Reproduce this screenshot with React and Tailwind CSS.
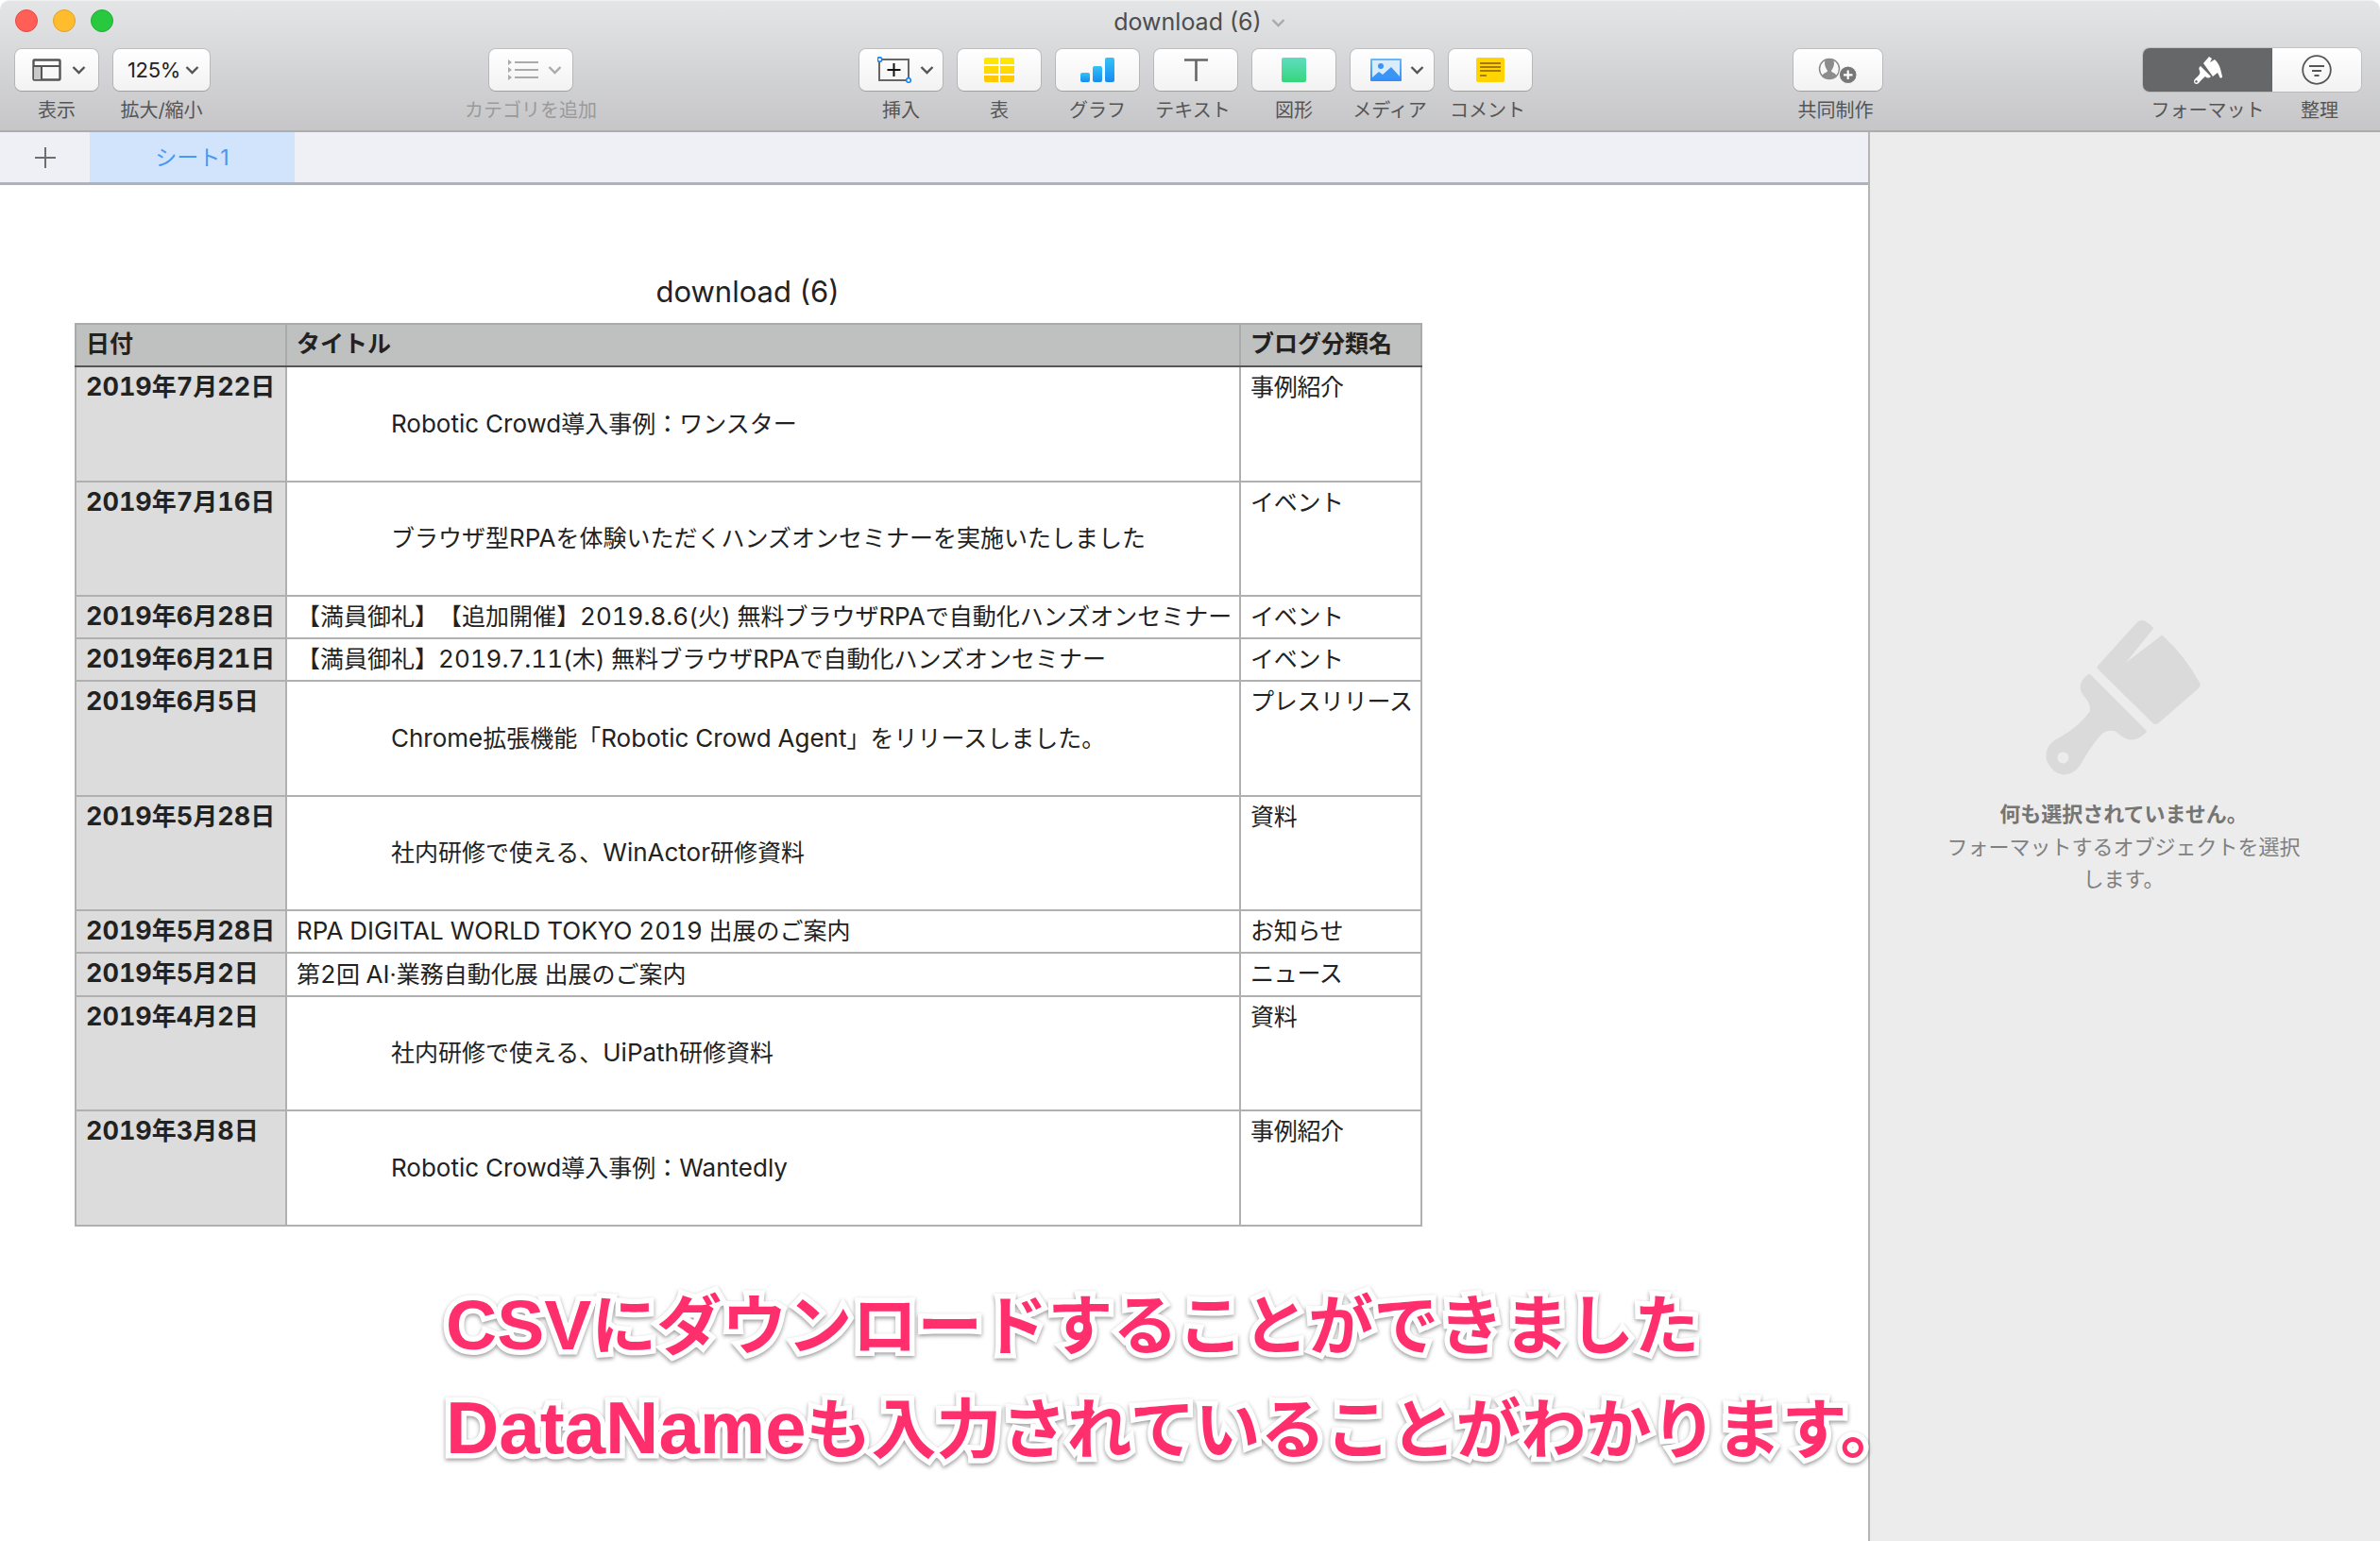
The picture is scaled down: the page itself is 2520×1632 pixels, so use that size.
import React from 'react';

const rows = [
  { date: '2019年7月22日', title: 'Robotic Crowd導入事例：ワンスター', cat: '事例紹介', h: 'h-[122px]', tall: true },
  { date: '2019年7月16日', title: 'ブラウザ型RPAを体験いただくハンズオンセミナーを実施いたしました', cat: 'イベント', h: 'h-[121px]', tall: true },
  { date: '2019年6月28日', title: '【満員御礼】【追加開催】2019.8.6(火) 無料ブラウザRPAで自動化ハンズオンセミナー', cat: 'イベント', h: 'h-[45px]' },
  { date: '2019年6月21日', title: '【満員御礼】2019.7.11(木) 無料ブラウザRPAで自動化ハンズオンセミナー', cat: 'イベント', h: 'h-[45px]' },
  { date: '2019年6月5日', title: 'Chrome拡張機能「Robotic Crowd Agent」をリリースしました。', cat: 'プレスリリース', h: 'h-[122px]', tall: true },
  { date: '2019年5月28日', title: '社内研修で使える、WinActor研修資料', cat: '資料', h: 'h-[121px]', tall: true },
  { date: '2019年5月28日', title: 'RPA DIGITAL WORLD TOKYO 2019 出展のご案内', cat: 'お知らせ', h: 'h-[45px]' },
  { date: '2019年5月2日', title: '第2回 AI·業務自動化展 出展のご案内', cat: 'ニュース', h: 'h-[46px]' },
  { date: '2019年4月2日', title: '社内研修で使える、UiPath研修資料', cat: '資料', h: 'h-[121px]', tall: true },
  { date: '2019年3月8日', title: 'Robotic Crowd導入事例：Wantedly', cat: '事例紹介', h: 'h-[122px]', tall: true },
];

// latin runs sit larger than the kana next to them in the reference
const Mixed = ({ text, latin }) =>
  text.split(/([A-Za-z0-9.]+(?: [A-Za-z0-9.]+)*)/).map((part, i) =>
    i % 2 ? <span key={i} className={latin}>{part}</span> : part
  );

const Chevron = ({ color = '#555' }) => (
  <svg width="15" height="10" viewBox="0 0 15 10" fill="none">
    <path d="M1.5 2 L7.5 8 L13.5 2" stroke={color} strokeWidth="2.4" />
  </svg>
);

const Tool = ({ label, w, className = '', labelClass = '', muted, children }) => (
  <div className={`flex flex-col items-center shrink-0 ${w} ${className}`}>
    <div className="h-[44px] w-full rounded-[7px] bg-linear-to-b from-white to-[#f2f2f2] shadow-[0_0_0_1px_rgba(0,0,0,0.12),0_1px_1px_rgba(0,0,0,0.12)] flex items-center justify-center">
      {children}
    </div>
    <div className={`mt-[8px] text-[20px] leading-[26px] whitespace-nowrap ${muted ? 'text-[#9a9a9a]' : 'text-[#555]'} ${labelClass}`}>{label}</div>
  </div>
);

const Brush = ({ className, fill, hole }) => (
  <svg className={className} viewBox="500 100 495 500">
    <path fill={fill} d="M665 250 L790 112 Q800 102 815 108 Q830 115 843 130 L755 240 L870 152 Q940 215 990 305 Q993 315 985 322 L858 432 Q848 440 838 430 L668 262 Q660 255 665 250 Z" />
    <path fill={fill} d="M640 275 L822 458 Q800 485 770 485 Q745 480 725 460 Q700 450 680 465 Q650 495 610 565 Q590 595 555 596 Q520 590 503 550 Q495 510 530 485 Q600 450 640 395 Q645 375 625 350 Q605 330 612 305 Q620 285 640 275 Z" />
    <circle cx="555" cy="542" r="18" fill={hole} />
  </svg>
);

export default function App() {
  return (
    <div className="relative w-[2520px] h-[1632px] overflow-hidden bg-white flex flex-col font-['Inter','Noto_Sans_CJK_JP',sans-serif] text-[#222]">
      {/* toolbar */}
      <div className="h-[140px] shrink-0 rounded-t-[10px] bg-linear-to-b from-[#e4e5e7] to-[#c6c6c8] border-t border-t-[#f0f0f0] border-b-2 border-b-[#adadad]">
        <div className="relative h-[45px] flex items-center justify-center">
          <div className="absolute left-[16px] top-[9px] flex gap-[16px]">
            <span className="w-[24px] h-[24px] rounded-full bg-[#ff5f57] border border-[#e5483f]" />
            <span className="w-[24px] h-[24px] rounded-full bg-[#ffbd2e] border border-[#e0a028]" />
            <span className="w-[24px] h-[24px] rounded-full bg-[#28c93f] border border-[#22ad35]" />
          </div>
          <div className="ml-[20px] flex items-center gap-[10px] text-[25px] leading-none text-[#4d4d4d]">
            download (6)
            <Chevron color="#aaa" />
          </div>
        </div>
        <div className="flex pl-[16px] pt-[6px]">
          <Tool label="表示" w="w-[88px]">
            <svg width="31" height="24" viewBox="0 0 31 24" className="ml-[5px] mr-[11px]">
              <rect x="1.5" y="1.5" width="28" height="21" fill="none" stroke="#555" strokeWidth="2.4" rx="1" />
              <rect x="2" y="8" width="8" height="14" fill="#c9c9c9" />
              <path d="M2 8 H29 M10 8 V22" stroke="#555" strokeWidth="2" />
            </svg>
            <Chevron />
          </Tool>
          <Tool label="拡大/縮小" w="w-[102px]" className="ml-[16px]">
            <span className="ml-[4px] mr-[5px] text-[22px] tracking-[-0.3px] text-[#222]">125%</span>
            <Chevron />
          </Tool>
          <Tool label="カテゴリを追加" w="w-[88px]" className="ml-[296px]" muted>
            <svg width="32" height="24" viewBox="0 0 32 24" className="ml-[8px] mr-[10px]">
              <path d="M0 1 L4 4 L0 7 Z M0 9 L4 12 L0 15 Z M0 17 L4 20 L0 23 Z" fill="#aaa" />
              <path d="M7 4 H32 M7 12 H32 M7 20 H32" stroke="#aaa" strokeWidth="2" />
            </svg>
            <Chevron color="#aaa" />
          </Tool>
          <Tool label="挿入" w="w-[88px]" className="ml-[304px]">
            <svg width="36" height="28" viewBox="0 0 36 28" className="ml-[9px] mr-[9px]">
              <rect x="2" y="3" width="31" height="22" fill="none" stroke="#666" strokeWidth="2" />
              <path d="M17.5 7 V21 M10.5 14 H24.5" stroke="#111" strokeWidth="2" />
              <circle cx="2.5" cy="3" r="2.3" fill="#fff" stroke="#0a84ff" strokeWidth="1.6" />
              <circle cx="33" cy="25" r="2.3" fill="#fff" stroke="#0a84ff" strokeWidth="1.6" />
            </svg>
            <Chevron />
          </Tool>
          <Tool label="表" w="w-[88px]" className="ml-[16px]">
            <div className="w-[32px] h-[26px] grid grid-cols-2 grid-rows-3 gap-[2px] rounded-[2px] overflow-hidden">
              <span className="bg-[#ffe600]" /><span className="bg-[#ffe600]" />
              <span className="bg-[#ffd900]" /><span className="bg-[#ffd900]" />
              <span className="bg-[#ffc800]" /><span className="bg-[#ffc800]" />
            </div>
          </Tool>
          <Tool label="グラフ" w="w-[88px]" className="ml-[16px]">
            <div className="w-[36px] h-[26px] flex items-end gap-[3px]">
              <span className="flex-1 h-[10px] rounded-[2px] bg-linear-to-b from-[#35c3f5] to-[#1a8bf0]" />
              <span className="flex-1 h-[17px] rounded-[2px] bg-linear-to-b from-[#35c3f5] to-[#1a8bf0]" />
              <span className="flex-1 h-[26px] rounded-[2px] bg-linear-to-b from-[#35c3f5] to-[#1a8bf0]" />
            </div>
          </Tool>
          <Tool label="テキスト" w="w-[88px]" className="ml-[16px]" labelClass="-ml-[6px]">
            <svg width="25" height="24" viewBox="0 0 25 24">
              <path d="M0 1.5 H25 M12.5 1.5 V24" stroke="#666" strokeWidth="2.6" />
            </svg>
          </Tool>
          <Tool label="図形" w="w-[88px]" className="ml-[16px]">
            <div className="w-[26px] h-[26px] rounded-[2px] bg-linear-to-b from-[#5fdcc0] to-[#33d67a]" />
          </Tool>
          <Tool label="メディア" w="w-[88px]" className="ml-[16px]" labelClass="-ml-[5px]">
            <svg width="33" height="24" viewBox="0 0 33 24" className="ml-[10px] mr-[9px]">
              <defs>
                <linearGradient id="mediaBg" x1="0" y1="0" x2="0" y2="1">
                  <stop offset="0" stopColor="#6db8f7" />
                  <stop offset="1" stopColor="#2f8dfb" />
                </linearGradient>
              </defs>
              <rect width="33" height="24" rx="1" fill="url(#mediaBg)" />
              <rect x="2" y="2" width="29" height="18" fill="#d8ecfc" />
              <circle cx="11" cy="8" r="3" fill="#3b95f5" />
              <path d="M2 20 L9 14 L13 17 L22 9 L31 19 V20 Z" fill="#3b95f5" />
            </svg>
            <Chevron />
          </Tool>
          <Tool label="コメント" w="w-[88px]" className="ml-[16px]" labelClass="-ml-[6px]">
            <svg width="30" height="26" viewBox="0 0 30 26">
              <rect width="30" height="26" rx="2" fill="#ffd400" />
              <path d="M4 6 H26 M4 10 H26 M4 14 H26 M4 19 H11" stroke="#a5781e" strokeWidth="2" />
            </svg>
          </Tool>
          <Tool label="共同制作" w="w-[94px]" className="ml-[277px]" labelClass="-ml-[5px]">
            <svg width="70" height="45" viewBox="0 0 70 45" className="ml-[8px] -mt-[3px]">
              <circle cx="22" cy="23" r="10.5" fill="none" stroke="#8a8a8a" strokeWidth="1.5" />
              <path d="M14 31 C15 27 20 27 20 25 C18 22 17 19 17 17 C17 13 19 12 22 12 C25 12 27 13 27 17 C27 19 26 22 24 25 C24 27 29 27 30 31 C27 34 17 34 14 31 Z" fill="#8c8c8c" />
              <circle cx="41.7" cy="29.3" r="9.4" fill="#777" stroke="#f8f8f8" strokeWidth="1.2" />
              <path d="M41.7 24.5 V34 M37 29.3 H46.5" stroke="#fff" strokeWidth="2.2" />
            </svg>
          </Tool>
          <div className="ml-[276px] flex flex-col shrink-0">
            <div className="flex h-[46px] -mt-[1px] rounded-[7px] shadow-[0_0_0_1px_rgba(0,0,0,0.1)] overflow-hidden">
              <div className="w-[137px] bg-[#666768] flex items-center justify-center">
                <svg width="60" height="45" viewBox="0 0 60 45" className="ml-[5px] -mt-[3px]">
                  <path d="M23 17 L29 10 L32 12 L30 16 L35 13 C38 16 40 19 41 23 L43 31 C43 33 40 33 40 31 L38 27 L33 31 Z" fill="#fff" />
                  <path fillRule="evenodd" d="M20 20 L31 31 C29 33 27 33 25 31 C22 33 20 36 18 38 C16 40 13 39 13 36 C13 34 15 33 17 31 C19 29 20 27 19 25 C18 23 18 21 20 20 Z M15.5 35 a1.3 1.3 0 1 0 0.01 0 Z" fill="#fff" />
                </svg>
              </div>
              <div className="w-[94px] bg-linear-to-b from-white to-[#f2f2f2] flex items-center justify-center">
                <svg width="32" height="32" viewBox="0 0 32 32" fill="none">
                  <circle cx="16" cy="16" r="14.8" stroke="#555" strokeWidth="1.8" />
                  <path d="M8 12 H24 M11 17 H21 M13.5 22 H18.5" stroke="#555" strokeWidth="1.8" />
                </svg>
              </div>
            </div>
            <div className="flex mt-[7px] text-[20px] leading-[26px] text-[#555]">
              <span className="w-[137px] text-center whitespace-nowrap">フォーマット</span>
              <span className="w-[94px] pl-[6px] text-center whitespace-nowrap">整理</span>
            </div>
          </div>
        </div>
      </div>

      <div className="flex flex-1 min-h-0">
        {/* sheet */}
        <div className="w-[1978px] shrink-0 flex flex-col">
          <div className="h-[56px] shrink-0 flex bg-[#eff0f5] border-b-[3px] border-b-[#adb2bb]">
            <div className="w-[95px] flex items-center justify-center">
              <svg width="22" height="22" viewBox="0 0 22 22">
                <path d="M11 0 V22 M0 11 H22" stroke="#6e6e6e" strokeWidth="2" />
              </svg>
            </div>
            <div className="w-[217px] pt-[2px] bg-[#d2e4fb] flex items-center justify-center text-[23px] text-[#4a98f2]">シート1</div>
          </div>
          <div className="pl-[79px] pt-[91px]">
            <div className="w-[1425px] text-center text-[31px] leading-[44px] text-[#222]">download (6)</div>
            <table className="mt-[11px] w-[1425px] table-fixed border-collapse text-[25px] leading-[36px] text-[#222] tabular-nums [text-spacing-trim:space-all]">
              <colgroup>
                <col className="w-[223px]" />
                <col className="w-[1010px]" />
                <col className="w-[192px]" />
              </colgroup>
              <thead>
                <tr className="h-[45px] bg-[#bfc1c0] font-bold">
                  <th className="border-2 border-[#a9abaa] border-b-[#555] px-[10px] pb-[3px] text-left font-bold">日付</th>
                  <th className="border-2 border-[#a9abaa] border-b-[#555] px-[10px] pb-[3px] text-left font-bold">タイトル</th>
                  <th className="border-2 border-[#a9abaa] border-b-[#555] px-[10px] pb-[3px] text-left font-bold">ブログ分類名</th>
                </tr>
              </thead>
              <tbody>
                {rows.map((r, i) => (
                  <tr key={i} className={r.h}>
                    <td className="border-2 border-[#b0b0b0] bg-[#dcdcdc] px-[10px] pt-[3px] align-top text-[26px] font-bold whitespace-nowrap">
                      <Mixed text={r.date} latin="text-[27px]" />
                    </td>
                    <td className={`border-2 border-[#b0b0b0] align-middle pb-[1px] whitespace-nowrap ${r.tall ? 'pl-[110px]' : 'pl-[10px]'}`}>
                      <Mixed text={r.title} latin="text-[26px]" />
                    </td>
                    <td className="border-2 border-[#b0b0b0] px-[10px] pt-[3px] align-top tracking-[-0.3px] whitespace-nowrap">{r.cat}</td>
                  </tr>
                ))}
              </tbody>
            </table>
          </div>
        </div>

        {/* inspector */}
        <div className="flex-1 border-l-2 border-l-[#b5b5b5] bg-[#ececec] flex flex-col items-center pt-[515px] pr-[3px]">
          <Brush className="w-[165px] h-[167px]" fill="#dadada" hole="#ececec" />
          <div className="mt-[23px] text-[22px] leading-[34px] font-bold text-[#757575]">何も選択されていません。</div>
          <div className="mt-[1px] w-[385px] text-center text-[22px] leading-[34px] text-[#808080]">フォーマットするオブジェクトを選択します。</div>
        </div>
      </div>

      {/* annotation */}
      <div className="absolute left-[472px] top-[1349px] z-10 whitespace-nowrap font-['Liberation_Sans','Noto_Sans_CJK_JP',sans-serif] text-[69px] leading-[109px] font-bold text-[#ff2f6e] [-webkit-text-stroke:11px_white] [paint-order:stroke_fill] drop-shadow-[0_2px_2px_rgba(0,0,0,0.4)]">
        <div><span className="text-[75px]">CSV</span>にダウンロードすることができました</div>
        <div className="-mt-[2px]"><span className="text-[78px]">DataName</span>も入力されていることがわかります。</div>
      </div>
    </div>
  );
}
